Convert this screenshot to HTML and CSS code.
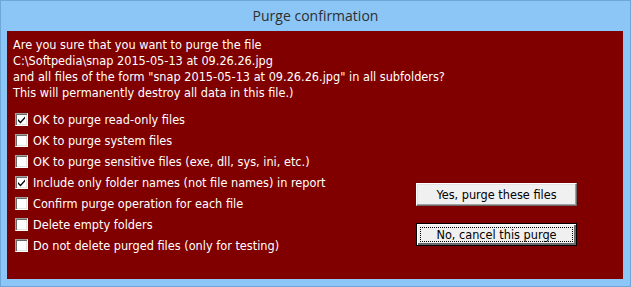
FILE: index.html
```html
<!DOCTYPE html>
<html>
<head>
<meta charset="utf-8">
<link rel="stylesheet" href="styles.css">
</head>
<body>
<div class="window">
  <div class="titlebar">Purge confirmation</div>
  <div class="panel">
    <div class="message">
      <div>Are you sure that you want to purge the file</div>
      <div>C:\Softpedia\snap 2015-05-13 at 09.26.26.jpg</div>
      <div>and all files of the form "snap 2015-05-13 at 09.26.26.jpg" in all subfolders?</div>
      <div>This will permanently destroy all data in this file.)</div>
    </div>
    <div class="content">
      <div class="options">
        <div class="opt"><span class="box checked"><svg viewBox="0 0 9 9" width="9" height="9"><path d="M1 4 L3.5 6.5 L8 1.5 L8 3.5 L3.5 8.5 L1 6 Z" fill="#000"/></svg></span><span>OK to purge read-only files</span></div>
        <div class="opt"><span class="box"></span><span>OK to purge system files</span></div>
        <div class="opt"><span class="box"></span><span>OK to purge sensitive files (exe, dll, sys, ini, etc.)</span></div>
        <div class="opt"><span class="box checked"><svg viewBox="0 0 9 9" width="9" height="9"><path d="M1 4 L3.5 6.5 L8 1.5 L8 3.5 L3.5 8.5 L1 6 Z" fill="#000"/></svg></span><span>Include only folder names (not file names) in report</span></div>
        <div class="opt"><span class="box"></span><span>Confirm purge operation for each file</span></div>
        <div class="opt"><span class="box"></span><span>Delete empty folders</span></div>
        <div class="opt"><span class="box"></span><span>Do not delete purged files (only for testing)</span></div>
      </div>
      <div class="buttons">
        <div class="btn">Yes, purge these files</div>
        <div class="btn default"><span class="focus">No, cancel this purge</span></div>
      </div>
    </div>
  </div>
</div>
</body>
</html>
```
FILE: styles.css
```css
html, body {
  margin: 0;
  padding: 0;
}
body {
  width: 631px;
  height: 287px;
  overflow: hidden;
  background: #8cc6f7;
}
.window {
  box-sizing: border-box;
  width: 631px;
  height: 287px;
  border: 1px solid #6fa6d8;
  background: #8cc6f7;
  display: flex;
  flex-direction: column;
}
.titlebar {
  height: 30px;
  line-height: 30px;
  text-align: center;
  font-family: "Open Sans", sans-serif;
  font-size: 14px;
  color: #2e2e2e;
  box-sizing: border-box;
}
.panel {
  margin-left: 6px;
  width: 616px;
  height: 248px;
  background: #800000;
  color: #ffffff;
  font-family: "DejaVu Sans Condensed", "DejaVu Sans", sans-serif;
  font-size: 12.6px;
  box-sizing: border-box;
  padding: 6px 0 0 6px;
}
.message div {
  height: 16px;
  line-height: 16px;
  white-space: nowrap;
}
.content {
  display: flex;
  margin-top: 8px;
}
.options {
  width: 403px;
}
.opt {
  height: 21px;
  display: flex;
  align-items: center;
  white-space: nowrap;
}
.box {
  box-sizing: border-box;
  width: 13px;
  height: 13px;
  margin-left: 2px;
  margin-right: 5px;
  background: #fff;
  border-top: 1px solid #a0a0a0;
  border-left: 1px solid #a0a0a0;
  border-right: 1px solid #fff;
  border-bottom: 1px solid #fff;
  box-shadow: inset 1px 1px 0 #696969, inset -1px -1px 0 #e3e3e3;
  display: flex;
  align-items: center;
  justify-content: center;
  flex: none;
}
.buttons {
  padding-top: 74px;
  display: flex;
  flex-direction: column;
  gap: 17px;
}
.btn {
  box-sizing: border-box;
  width: 161px;
  height: 23px;
  background: #f0f0f0;
  color: #000;
  display: flex;
  align-items: center;
  justify-content: center;
  border-top: 1px solid #fff;
  border-left: 1px solid #fff;
  border-right: 1px solid #696969;
  border-bottom: 1px solid #696969;
  box-shadow: inset -1px -1px 0 #a0a0a0, inset 1px 1px 0 #e3e3e3;
  font-size: 12.6px;
}
.btn.default {
  border: 1px solid #000;
  box-shadow: inset 1px 1px 0 #fff, inset -2px -2px 0 #696969;
  padding: 3px;
}
.focus {
  box-sizing: border-box;
  width: 100%;
  height: 100%;
  border: 1px dotted #000;
  display: flex;
  align-items: center;
  justify-content: center;
}
```
